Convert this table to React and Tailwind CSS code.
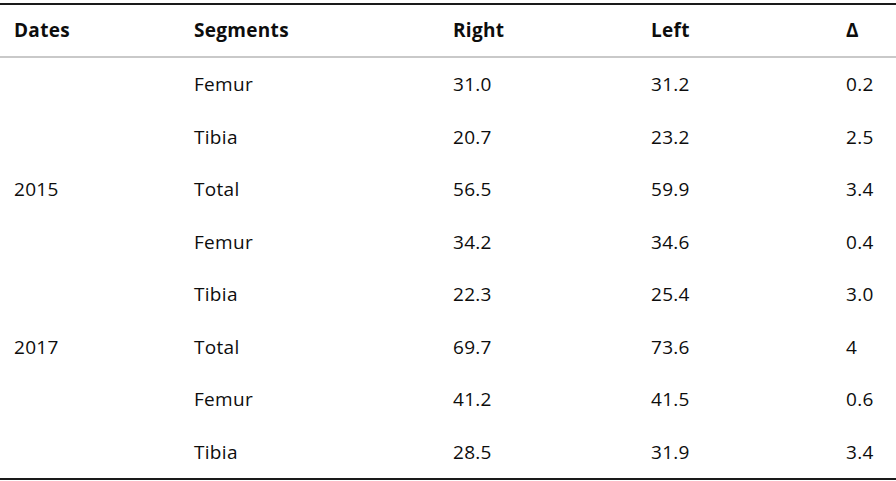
const rows = [
    { date: "", seg: "Femur", right: "31.0", left: "31.2", delta: "0.2" },
    { date: "", seg: "Tibia", right: "20.7", left: "23.2", delta: "2.5" },
    { date: "2015", seg: "Total", right: "56.5", left: "59.9", delta: "3.4" },
    { date: "", seg: "Femur", right: "34.2", left: "34.6", delta: "0.4" },
    { date: "", seg: "Tibia", right: "22.3", left: "25.4", delta: "3.0" },
    { date: "2017", seg: "Total", right: "69.7", left: "73.6", delta: "4" },
    { date: "", seg: "Femur", right: "41.2", left: "41.5", delta: "0.6" },
    { date: "", seg: "Tibia", right: "28.5", left: "31.9", delta: "3.4" },
];

const cols = "grid grid-cols-[180px_259px_198px_195px_1fr] items-center pl-[14px]";

export default function App() {
    return (
        <div className="w-[896px] h-[481px] bg-white pt-[3px] text-[#0d0d0d] font-['Open_Sans',sans-serif] text-[19px] tracking-[0.3px]">
            <div className="border-t-2 border-b-2 border-t-[#1a1a1a] border-b-[#1a1a1a]">
                {/* Header */}
                <div className={`${cols} h-[53px] border-b-2 border-[#c9c9c9] font-bold`}>
                    <div>Dates</div>
                    <div>Segments</div>
                    <div>Right</div>
                    <div>Left</div>
                    <div>Δ</div>
                </div>

                {/* Body */}
                {rows.map((r, i) => (
                    <div key={i} className={`${cols} h-[52.5px]`}>
                        <div>{r.date}</div>
                        <div>{r.seg}</div>
                        <div>{r.right}</div>
                        <div>{r.left}</div>
                        <div>{r.delta}</div>
                    </div>
                ))}
            </div>
        </div>
    );
}
